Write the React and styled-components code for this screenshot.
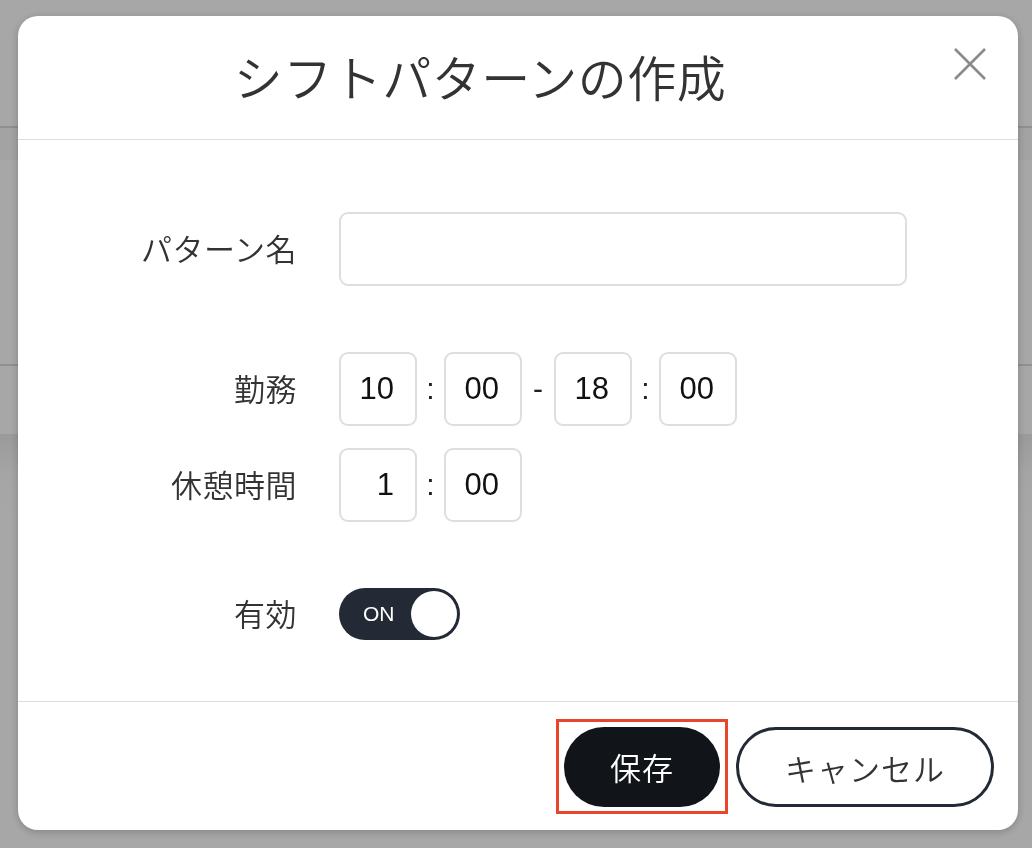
import styled, { createGlobalStyle } from "styled-components";

const GlobalStyle = createGlobalStyle`
  html, body {
    margin: 0;
    padding: 0;
    width: 100%;
    height: 100%;
    overflow: hidden;
  }
  body {
    font-family: "Noto Sans CJK JP", "Noto Sans", sans-serif;
    background: #ffffff;
  }
  * {
    box-sizing: border-box;
  }
`;

const Page = styled.div`
  width: 1032px;
  height: 848px;
  display: flex;
  flex-direction: column;
  background: #ffffff;
`;

const PageHeader = styled.div`
  height: 128px;
  border-bottom: 2px solid #dcdcdc;
`;

const PageTabs = styled.div`
  height: 32px;
  background: #f9f9f9;
`;

const PageRow = styled.div`
  margin-top: 204px;
  height: 70px;
  border-top: 2px solid #dcdcdc;
`;

const PageSection = styled.div`
  flex: 1;
  background: linear-gradient(#ececec, #fcfcfc 40px, #ffffff 80px);
`;

const Overlay = styled.div`
  position: fixed;
  inset: 0;
  background: rgba(0, 0, 0, 0.345);
  display: flex;
  align-items: flex-start;
  justify-content: flex-start;
  padding: 16px 14px 18px 18px;
`;

const Modal = styled.div`
  width: 1000px;
  height: 814px;
  background: #ffffff;
  border-radius: 20px;
  box-shadow: 0 2px 8px rgba(0, 0, 0, 0.22);
  display: flex;
  flex-direction: column;
  overflow: hidden;
`;

const Header = styled.div`
  height: 124px;
  border-bottom: 1px solid #dddddd;
  display: flex;
  align-items: center;
  padding-right: 20px;
`;

const Title = styled.h1`
  flex: 1;
  margin: 0;
  text-align: center;
  font-size: 49px;
  font-weight: 350;
  color: #333333;
  letter-spacing: 0.5px;
  line-height: 1;
  padding-bottom: 4px;
`;

const CloseButton = styled.button`
  width: 56px;
  height: 56px;
  border: none;
  background: transparent;
  padding: 0;
  display: flex;
  align-items: center;
  justify-content: center;
  cursor: pointer;
  margin-top: -28px;
`;

const Body = styled.div`
  flex: 1;
  padding: 72px 0 0;
  display: grid;
  grid-template-columns: 279px 1fr;
  column-gap: 42px;
  align-content: start;
`;

const Label = styled.div`
  grid-column: 1;
  text-align: right;
  font-size: 31px;
  font-weight: 350;
  color: #333333;
  display: flex;
  align-items: center;
  justify-content: flex-end;
  height: ${(p) => p.$h || 74}px;
  margin-top: ${(p) => p.$mt || 0}px;
  padding-bottom: 4px;
  letter-spacing: 0.5px;
`;

const Control = styled.div`
  grid-column: 2;
  display: flex;
  align-items: center;
  height: ${(p) => p.$h || 74}px;
  margin-top: ${(p) => p.$mt || 0}px;
`;

const TextInput = styled.input`
  width: 568px;
  height: 74px;
  border: 2px solid #dedede;
  border-radius: 9px;
  outline: none;
  padding: 0 18px;
  font-size: 30px;
  font-family: "Noto Sans CJK JP", sans-serif;
`;

const TimeBox = styled.input`
  width: 78px;
  height: 74px;
  border: 2px solid #dedede;
  border-radius: 9px;
  outline: none;
  padding: 0 21px 0 0;
  text-align: right;
  font-family: "Liberation Sans", Arial, sans-serif;
  font-size: 31px;
  color: #111111;
  background: #ffffff;
`;

const Sep = styled.span`
  width: ${(p) => p.$w}px;
  text-align: center;
  font-family: "Liberation Sans", Arial, sans-serif;
  font-size: 30px;
  color: #222222;
`;

const Toggle = styled.button`
  width: 121px;
  height: 52px;
  border-radius: 26px;
  border: none;
  background: #232a35;
  padding: 0 3px 0 24px;
  display: flex;
  align-items: center;
  justify-content: space-between;
  cursor: pointer;
`;

const ToggleText = styled.span`
  font-family: "Liberation Sans", Arial, sans-serif;
  font-size: 21px;
  color: #ffffff;
`;

const Knob = styled.span`
  width: 46px;
  height: 46px;
  border-radius: 50%;
  background: #ffffff;
`;

const Footer = styled.div`
  height: 129px;
  border-top: 1px solid #dddddd;
  display: flex;
  justify-content: flex-end;
  align-items: flex-start;
  gap: 8px;
  padding: 17px 24px 0 0;
`;

const Highlight = styled.div`
  border: 3.5px solid #e8452c;
  padding: 4.5px 5px;
  display: flex;
`;

const Button = styled.button`
  height: 80px;
  width: ${(p) => p.$w}px;
  margin-top: ${(p) => (p.$primary ? 0 : 8)}px;
  border-radius: 40px;
  font-family: "Noto Sans CJK JP", sans-serif;
  font-size: 31px;
  font-weight: 350;
  letter-spacing: 1px;
  cursor: pointer;
  background: ${(p) => (p.$primary ? "#111418" : "#ffffff")};
  color: ${(p) => (p.$primary ? "#ffffff" : "#333333")};
  border: ${(p) => (p.$primary ? "none" : "3px solid #232a35")};
`;

const CloseIcon = () => (
  <svg width="32" height="32" viewBox="0 0 32 32">
    <path d="M1 1 L31 31 M31 1 L1 31" stroke="#8a8a8a" strokeWidth="2.6" fill="none" />
  </svg>
);

const App = () => {
  return (
    <>
      <GlobalStyle />
      <Page>
        <PageHeader />
        <PageTabs />
        <PageRow />
        <PageSection />
      </Page>
      <Overlay>
        <Modal>
          <Header>
            <Title>シフトパターンの作成</Title>
            <CloseButton aria-label="close">
              <CloseIcon />
            </CloseButton>
          </Header>
          <Body>
            <Label>パターン名</Label>
            <Control>
              <TextInput type="text" />
            </Control>

            <Label $mt={66}>勤務</Label>
            <Control $mt={66}>
              <TimeBox defaultValue="10" />
              <Sep $w={27}>:</Sep>
              <TimeBox defaultValue="00" />
              <Sep $w={32}>-</Sep>
              <TimeBox defaultValue="18" />
              <Sep $w={27}>:</Sep>
              <TimeBox defaultValue="00" />
            </Control>

            <Label $mt={22}>休憩時間</Label>
            <Control $mt={22}>
              <TimeBox defaultValue="1" />
              <Sep $w={27}>:</Sep>
              <TimeBox defaultValue="00" />
            </Control>

            <Label $mt={66} $h={52}>有効</Label>
            <Control $mt={66} $h={52}>
              <Toggle>
                <ToggleText>ON</ToggleText>
                <Knob />
              </Toggle>
            </Control>
          </Body>
          <Footer>
            <Highlight>
              <Button $primary $w={156}>保存</Button>
            </Highlight>
            <Button $w={258}>キャンセル</Button>
          </Footer>
        </Modal>
      </Overlay>
    </>
  );
};

export default App;
